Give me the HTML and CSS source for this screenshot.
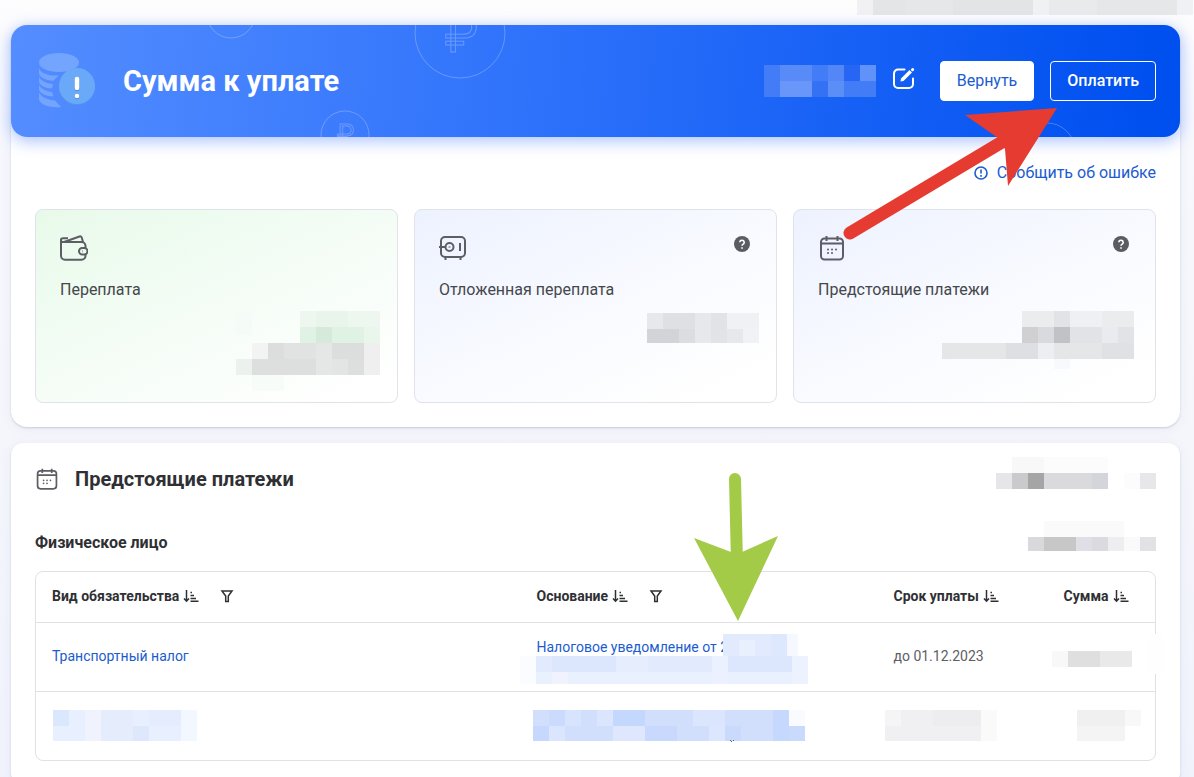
FILE: index.html
```html
<!DOCTYPE html>
<html lang="ru">
<head>
  <meta charset="UTF-8" />
  <meta name="viewport" content="width=device-width, initial-scale=1.0" />
  <title>Сумма к уплате</title>
  <link rel="stylesheet" href="styles.css">
</head>
<body>
  <!-- shared icons -->
  <svg class="sprite" aria-hidden="true">
    <symbol id="calendar" viewBox="0 0 28 28">
      <rect x="3" y="4.5" width="22" height="21" rx="3.5"/>
      <path d="M3 9.5h22M8.500 2v5M19.500 2v5"/>
      <path class="dots" d="M10 15.500h.01M14 15.500h.01M18 15.500h.01M10 19h.01M14 19h.01"/>
    </symbol>
    <symbol id="sort" viewBox="0 0 16 16">
      <path d="M3.500 2v11M1 10.500l2.500 2.700L6 10.500M7.500 4.500h1.500M7.500 7.500h3.500M7.500 10.500h5.500M7.500 13.300h8"/>
    </symbol>
    <symbol id="filter" viewBox="0 0 16 16">
      <path d="M3 3h10L9.300 8v5.500H6.700V8z"/>
    </symbol>
    <symbol id="help" viewBox="0 0 16 16">
      <circle cx="8" cy="8" r="8" fill="#5a5c61"/>
      <path d="M5.800 6.300a2.200 2.100 0 1 1 3.400 1.800c-.8.5-1.200.8-1.200 1.700M8 11.200v1.600" fill="none" stroke="#fff" stroke-width="1.600"/>
    </symbol>
  </svg>

  <div class="page">
    <header class="topbar">
      <svg class="mosaic" width="337" height="15">
        <rect x="0" width="16" height="15" fill="#f1f1f3"/>
        <rect x="16" width="32" height="15" fill="#e4e5e6"/>
        <rect x="48" width="48" height="15" fill="#e6e7e8"/>
        <rect x="96" width="80" height="15" fill="#e3e4e6"/>
        <rect x="176" width="16" height="15" fill="#f0f1f3"/>
        <rect x="192" width="48" height="15" fill="#e9eaec"/>
        <rect x="240" width="80" height="15" fill="#e6e7e8"/>
        <rect x="320" width="16" height="15" fill="#eff1f4"/>
      </svg>
    </header>

    <section class="card summary">
      <div class="banner">
        <svg class="banner-decor" width="1169" height="112" aria-hidden="true">
          <circle cx="220" cy="-11" r="24"/>
          <circle cx="449" cy="8" r="45"/>
          <circle cx="334" cy="110" r="24"/>
          <circle cx="1036" cy="126" r="28"/>
          <text x="434" y="27" font-size="50">₽</text>
          <text x="326" y="118" font-size="26">₽</text>
        </svg>
        <svg class="banner-icon" width="60" height="60" viewBox="0 0 60 60" aria-hidden="true">
          <g fill="#74a5fe">
            <ellipse cx="24" cy="11.500" rx="20" ry="9.500"/>
            <path d="M4 17c2 6 10 8 20 7.500-3 2-4.500 4-5.500 5.500C10 29 4 26 4 22z"/>
            <path d="M4 26c2 4 7 6.500 14 7l-1 4.500C9 37 4 34 4 30z"/>
            <path d="M4 34c2 4 7 6.500 13 7l1.500 4.500C10 45 4 42 4 38z"/>
            <path d="M4 42c3 4.500 9 7 16 7.500l6 6.500C14 57.500 4 53 4 48z"/>
          </g>
          <circle cx="42" cy="36" r="18" fill="#5594f0"/>
          <circle cx="42" cy="35" r="18" fill="#69a9f7"/>
          <path d="M42 29v9M42 46v.01" stroke="#4a86d5" stroke-width="4.500" stroke-linecap="round"/>
          <path d="M42 28v9M42 45v.01" stroke="#fff" stroke-width="4.500" stroke-linecap="round"/>
        </svg>
        <h1>Сумма к уплате</h1>
        <svg class="mosaic banner-amount" width="112" height="32">
          <rect width="112" height="32" fill="#427cf6"/>
          <rect x="16" width="32" height="16" fill="#588bf8"/>
          <rect x="16" y="16" width="32" height="16" fill="#6897f9"/>
          <rect x="48" y="16" width="16" height="16" fill="#3471f5"/>
          <rect x="64" width="16" height="16" fill="#5387f8"/>
          <rect x="64" y="16" width="16" height="16" fill="#5c8ef8"/>
          <rect x="80" width="16" height="16" fill="#2766f5"/>
          <rect x="96" width="16" height="16" fill="#6192f9"/>
        </svg>
        <button class="edit" type="button" aria-label="Изменить">
          <svg width="24" height="24" viewBox="0 0 24 24">
            <path d="M12.500 3.500H6a4 4 0 0 0-4 4V18a4 4 0 0 0 4 4h11a4 4 0 0 0 4-4v-5.500"/>
            <path d="M8.500 15.500l.5-3L17.500 4l2.500 2.500-8.500 8.500z" fill="#fff" stroke="none"/>
            <path d="M20.500 3.700l.2-.2" stroke-width="3"/>
          </svg>
        </button>
        <button class="btn btn-light" type="button">Вернуть</button>
        <button class="btn btn-outline" type="button">Оплатить</button>
      </div>

      <div class="summary-body">
        <a class="report" href="#">
          <svg width="14" height="14" viewBox="0 0 14 14" aria-hidden="true">
            <circle cx="7" cy="7" r="6"/>
            <path d="M7 3.500v4M7 9v1.700"/>
          </svg>
          Сообщить об ошибке
        </a>

        <div class="stats">
          <div class="stat stat-green">
            <div class="stat-top">
              <svg class="icon" width="28" height="28" viewBox="0 0 28 28" aria-hidden="true">
                <path d="M1 5.500v16.300a4 4 0 0 0 4 4h16.500a4 4 0 0 0 4-4V20M25.500 14.500V12a4 4 0 0 0-4-4H3a2 2 0 0 1-2-2.200c0-1 1-1.500 2-1.500h5"/>
                <path d="M4 8L19.500 2.500c1.300-.4 2 .1 2.300 1.200L23 8"/>
                <rect x="19" y="14" width="8.500" height="6.500" rx="3.200"/>
                <path d="M22 17.200h.5"/>
              </svg>
            </div>
            <div class="stat-label">Переплата</div>
            <svg class="mosaic" width="192" height="80">
              <rect x="48" width="16" height="24" fill="#f5fcf7"/>
              <rect x="112" width="80" height="16" fill="#edf6ef"/>
              <rect x="128" width="32" height="16" fill="#e9f4eb"/>
              <rect x="112" y="16" width="80" height="16" fill="#e0f2e3"/>
              <rect x="128" y="16" width="16" height="16" fill="#d6ead9"/>
              <rect x="176" y="16" width="16" height="16" fill="#eaf6ec"/>
              <rect x="64" y="32" width="16" height="16" fill="#f1f4f2"/>
              <rect x="48" y="48" width="16" height="16" fill="#edf1ee"/>
              <rect x="80" y="32" width="96" height="16" fill="#dcdedd"/>
              <rect x="64" y="48" width="112" height="16" fill="#dcdfdd"/>
              <rect x="96" y="32" width="32" height="16" fill="#e0e3e1"/>
              <rect x="128" y="32" width="16" height="32" fill="#e5e7e6"/>
              <rect x="144" y="48" width="16" height="16" fill="#e3e5e4"/>
              <rect x="176" y="32" width="16" height="32" fill="#eeefee"/>
              <rect x="64" y="64" width="32" height="16" fill="#f7fcf8"/>
            </svg>
          </div>
          <div class="stat">
            <div class="stat-top">
              <svg class="icon" width="28" height="28" viewBox="0 0 28 28" aria-hidden="true">
                <rect x="2" y="3" width="24" height="20" rx="4"/>
                <circle cx="10.500" cy="13" r="4"/>
                <path d="M0 13h6M21 9v8M6.500 23v3M21.500 23v3M10.500 12.500v1"/>
              </svg>
              <svg class="help" width="16" height="16"><use href="#help"/></svg>
            </div>
            <div class="stat-label">Отложенная переплата</div>
            <svg class="mosaic" width="192" height="80">
              <rect x="80" y="2" width="112" height="30" fill="#e7e8eb"/>
              <rect x="96" y="2" width="32" height="16" fill="#dfe0e3"/>
              <rect x="80" y="18" width="32" height="14" fill="#d3d4d7"/>
              <rect x="112" y="18" width="16" height="14" fill="#dcdde0"/>
              <rect x="144" y="2" width="16" height="30" fill="#e2e3e6"/>
              <rect x="160" y="2" width="32" height="16" fill="#f0f1f4"/>
              <rect x="176" y="18" width="16" height="14" fill="#f1f2f5"/>
            </svg>
          </div>
          <div class="stat">
            <div class="stat-top">
              <svg class="icon" width="28" height="28" aria-hidden="true"><use href="#calendar"/></svg>
              <svg class="help" width="16" height="16"><use href="#help"/></svg>
            </div>
            <div class="stat-label">Предстоящие платежи</div>
            <svg class="mosaic" width="196" height="80">
              <rect x="80" width="112" height="16" fill="#ebecee"/>
              <rect x="112" width="16" height="16" fill="#e2e3e6"/>
              <rect x="128" width="32" height="16" fill="#eff0f3"/>
              <rect x="80" y="16" width="112" height="16" fill="#e2e3e6"/>
              <rect x="80" y="16" width="16" height="16" fill="#d0d0d3"/>
              <rect x="96" y="16" width="16" height="16" fill="#d9dadd"/>
              <rect x="112" y="16" width="16" height="16" fill="#c1c2c5"/>
              <rect x="160" y="16" width="16" height="16" fill="#eaebee"/>
              <rect y="32" width="192" height="16" fill="#e5e6e8"/>
              <rect x="64" y="32" width="32" height="16" fill="#dedfe2"/>
              <rect x="96" y="32" width="16" height="16" fill="#edeef1"/>
              <rect x="160" y="32" width="32" height="16" fill="#e0e1e4"/>
              <rect x="112" y="48" width="16" height="10" fill="#f8f9fc"/>
            </svg>
          </div>
        </div>
      </div>
    </section>

    <section class="card payments">
      <div class="row-head">
        <svg class="icon" width="24" height="24" aria-hidden="true"><use href="#calendar"/></svg>
        <h2>Предстоящие платежи</h2>
        <svg class="mosaic" width="160" height="24">
          <rect x="16" y="-10" width="32" height="16" fill="#f8f8f8"/>
          <rect x="48" y="-10" width="64" height="16" fill="#fcfcfc"/>
          <rect y="6" width="16" height="16" fill="#e6e6e8"/>
          <rect x="16" y="6" width="16" height="16" fill="#cacacc"/>
          <rect x="32" y="6" width="16" height="16" fill="#a5a5a6"/>
          <rect x="48" y="6" width="48" height="16" fill="#dadadd"/>
          <rect x="96" y="6" width="16" height="16" fill="#d4d4db"/>
          <rect x="128" y="6" width="16" height="16" fill="#fcfcfc"/>
          <rect x="144" y="6" width="16" height="16" fill="#e7e7e9"/>
        </svg>
      </div>

      <div class="row-head person">
        <h3>Физическое лицо</h3>
        <svg class="mosaic" width="128" height="24">
          <rect x="16" y="-10" width="80" height="16" fill="#fafafa"/>
          <rect y="6" width="16" height="14" fill="#d9d9db"/>
          <rect x="16" y="6" width="32" height="14" fill="#c7c7c8"/>
          <rect x="48" y="6" width="16" height="14" fill="#dfdfe5"/>
          <rect x="64" y="6" width="16" height="14" fill="#dbdbdf"/>
          <rect x="80" y="6" width="16" height="14" fill="#eeeef1"/>
          <rect x="96" y="6" width="16" height="14" fill="#fafafa"/>
          <rect x="112" y="6" width="16" height="14" fill="#e2e2e4"/>
        </svg>
      </div>

      <div class="table-wrap">
        <table>
          <colgroup>
            <col class="col-kind">
            <col class="col-basis">
            <col class="col-date">
            <col class="col-sum">
          </colgroup>
          <thead>
            <tr>
              <th><div class="th">Вид обязательства
                <button type="button" aria-label="Сортировать"><svg width="16" height="16"><use href="#sort"/></svg></button>
                <button class="filter" type="button" aria-label="Фильтр"><svg width="16" height="16"><use href="#filter"/></svg></button>
              </div></th>
              <th><div class="th">Основание
                <button type="button" aria-label="Сортировать"><svg width="16" height="16"><use href="#sort"/></svg></button>
                <button class="filter" type="button" aria-label="Фильтр"><svg width="16" height="16"><use href="#filter"/></svg></button>
              </div></th>
              <th><div class="th">Срок уплаты
                <button type="button" aria-label="Сортировать"><svg width="16" height="16"><use href="#sort"/></svg></button>
              </div></th>
              <th><div class="th">Сумма
                <button type="button" aria-label="Сортировать"><svg width="16" height="16"><use href="#sort"/></svg></button>
              </div></th>
            </tr>
          </thead>
          <tbody>
            <tr>
              <td><a href="#">Транспортный налог</a></td>
              <td>
                <div class="masked">
                  <a href="#">Налоговое уведомление от 2</a>
                  <svg class="mosaic" width="288" height="50">
                    <rect x="203" width="75" height="22" fill="#e2ebfd"/>
                    <rect x="219" y="6" width="16" height="16" fill="#e8effd"/>
                    <rect x="251" width="16" height="22" fill="#dde7fd"/>
                    <rect x="267" width="11" height="22" fill="#f5f8fe"/>
                    <rect y="22" width="16" height="28" fill="#fbfcff"/>
                    <rect x="16" y="22" width="272" height="16" fill="#e2eafd"/>
                    <rect x="16" y="38" width="272" height="12" fill="#eaf1fe"/>
                    <rect x="32" y="22" width="64" height="16" fill="#dce7fd"/>
                    <rect x="32" y="38" width="16" height="12" fill="#f0f3fe"/>
                    <rect x="96" y="22" width="32" height="16" fill="#e6eefd"/>
                    <rect x="192" y="22" width="16" height="28" fill="#ebf1fe"/>
                    <rect x="208" y="22" width="64" height="16" fill="#dce7fe"/>
                    <rect x="272" y="22" width="16" height="28" fill="#edf3fe"/>
                  </svg>
                </div>
              </td>
              <td>до 01.12.2023</td>
              <td>
                <div class="masked">
                  <svg class="mosaic" width="116" height="50">
                    <rect x="5" y="17" width="16" height="16" fill="#f8f8f8"/>
                    <rect x="21" y="17" width="64" height="16" fill="#e9e9ea"/>
                    <rect x="21" y="17" width="32" height="16" fill="#dfdfe0"/>
                    <rect x="101" y="0" width="16" height="40" fill="#fefefe"/>
                  </svg>
                </div>
              </td>
            </tr>
            <tr>
              <td>
                <div class="masked">
                  <svg class="mosaic" width="164" height="50">
                    <rect x="18" y="7" width="144" height="31" fill="#e8effe"/>
                    <rect x="18" y="7" width="16" height="16" fill="#dbe7fd"/>
                    <rect x="50" y="7" width="16" height="31" fill="#f0f3fe"/>
                    <rect x="66" y="7" width="32" height="31" fill="#e5edfd"/>
                    <rect x="98" y="23" width="16" height="15" fill="#dde8fd"/>
                    <rect x="114" y="7" width="32" height="16" fill="#e4ecfd"/>
                    <rect x="146" y="7" width="16" height="31" fill="#f3f7ff"/>
                  </svg>
                </div>
              </td>
              <td>
                <div class="masked">
                  <svg class="mosaic" width="288" height="50">
                    <rect x="13" y="7" width="256" height="31" fill="#d1dffd"/>
                    <rect x="29" y="7" width="16" height="16" fill="#cbdbfd"/>
                    <rect x="45" y="7" width="16" height="16" fill="#d8e4fd"/>
                    <rect x="77" y="7" width="16" height="16" fill="#dbe6fe"/>
                    <rect x="93" y="7" width="32" height="16" fill="#c4d7fd"/>
                    <rect x="13" y="23" width="16" height="15" fill="#c6d8fd"/>
                    <rect x="29" y="23" width="16" height="15" fill="#dbe6fe"/>
                    <rect x="93" y="23" width="32" height="15" fill="#dee7fe"/>
                    <rect x="125" y="23" width="32" height="15" fill="#c8d9fd"/>
                    <rect x="173" y="7" width="32" height="16" fill="#dbe5fe"/>
                    <rect x="189" y="23" width="16" height="15" fill="#dce6fe"/>
                    <rect x="205" y="23" width="16" height="15" fill="#c9dafd"/>
                    <rect x="253" y="7" width="16" height="31" fill="#c6d8fd"/>
                    <rect x="269" y="7" width="16" height="16" fill="#f9fbff"/>
                    <rect x="269" y="23" width="16" height="15" fill="#c9dafd"/>
                    <path d="M210 37h1M213 37h1M211 38h1" stroke="#53617a"/>
                  </svg>
                </div>
              </td>
              <td>
                <div class="masked">
                  <svg class="mosaic" width="120" height="50">
                    <rect x="9" y="7" width="96" height="31" fill="#f0f0f2"/>
                    <rect x="9" y="7" width="16" height="16" fill="#f5f5f6"/>
                    <rect x="57" y="7" width="48" height="16" fill="#ededef"/>
                    <rect x="105" y="7" width="16" height="31" fill="#fafafb"/>
                  </svg>
                </div>
              </td>
              <td>
                <div class="masked">
                  <svg class="mosaic" width="100" height="50">
                    <rect x="30" y="7" width="48" height="31" fill="#f4f4f5"/>
                    <rect x="30" y="7" width="48" height="16" fill="#f0f0f1"/>
                    <rect x="78" y="7" width="16" height="16" fill="#f8f8f9"/>
                  </svg>
                </div>
              </td>
            </tr>
          </tbody>
        </table>
      </div>
    </section>

    <!-- pointers over the page -->
    <svg class="pointer pointer-pay" width="216" height="136" viewBox="0 0 216 136" aria-hidden="true">
      <path d="M8 129L160 38" stroke="#e63b30" stroke-width="13" stroke-linecap="round"/>
      <path d="M215 4L123 11 156 34 163 45 166 82z" fill="#e63b30"/>
    </svg>
    <svg class="pointer pointer-basis" width="84" height="148" viewBox="0 0 84 148" aria-hidden="true">
      <path d="M41 6L43 90" stroke="#a3cb48" stroke-width="12" stroke-linecap="round"/>
      <path d="M44 148L0 65 37 79H48L84 63z" fill="#a3cb48"/>
    </svg>
  </div>
</body>
</html>
```
FILE: styles.css
```css
* {
  box-sizing: border-box;
}
body {
  margin: 0;
  font-family: Roboto, "Liberation Sans", sans-serif;
  font-size: 14px;
  line-height: 20px;
  color: #2f3033;
  background: linear-gradient(180deg, #fdfdfe 0, #f7f8fd 120px, #f5f6fb 430px, #f1f3fc 777px);
}
svg {
  display: block;
  flex: none;
}
a {
  color: #1b5ccf;
  text-decoration: none;
}
button {
  font-family: inherit;
  cursor: pointer;
}
h1, h2, h3 {
  margin: 0;
}
.sprite {
  position: absolute;
  width: 0;
  height: 0;
}
.mosaic {
  overflow: visible;
  shape-rendering: crispEdges;
}
.icon {
  fill: none;
  stroke: #5c5e64;
  stroke-width: 2;
  stroke-linejoin: round;
}
.dots {
  stroke-linecap: round;
}
.page {
  position: relative;
  padding: 0 14px 0 11px;
}
.topbar {
  display: flex;
  justify-content: flex-end;
  height: 25px;
  margin-right: -14px;
}
.card {
  background: #fff;
  border-radius: 16px;
  box-shadow: 0 1px 2px rgba(60, 64, 90, 0.2), 0 2px 12px rgba(90, 110, 200, 0.08);
}

/* Banner */
.banner {
  position: relative;
  display: flex;
  align-items: center;
  height: 112px;
  padding: 0 24px;
  border-radius: 16px;
  background: linear-gradient(95deg, #548dff 0%, #2e72fb 45%, #0050f0 97%);
  box-shadow: 0 4px 16px rgba(40, 100, 250, 0.4);
}
.banner-decor {
  position: absolute;
  inset: 0;
  width: 100%;
  border-radius: 16px;
  overflow: hidden;
  fill: none;
  stroke: #fff;
  stroke-opacity: 0.25;
}
.banner h1 {
  margin-left: 28px;
  font-size: 29px;
  line-height: 36px;
  font-weight: 700;
  color: #fff;
}
.banner-amount {
  margin-left: auto;
}
.edit {
  position: relative;
  margin: 0 24px 0 16px;
  padding: 0 0 6px;
  border: none;
  background: none;
}
.edit svg {
  fill: none;
  stroke: #fff;
  stroke-width: 2;
  stroke-linecap: round;
}
.btn {
  position: relative;
  height: 40px;
  padding: 0 16px 2px;
  border: 1px solid #fff;
  border-radius: 4px;
  font-size: 16px;
}
.btn-light {
  background: #fff;
  color: #1b5ccf;
}
.btn-outline {
  margin-left: 16px;
  background: none;
  color: #fff;
  font-weight: 500;
}

/* Summary cards */
.summary-body {
  padding: 24px;
}
.report {
  display: flex;
  justify-content: flex-end;
  align-items: center;
  gap: 9px;
  margin-bottom: 24px;
  font-size: 16px;
  line-height: 24px;
}
.report svg {
  fill: none;
  stroke: currentColor;
  stroke-width: 1.6;
}
.stats {
  display: grid;
  grid-template-columns: repeat(3, 1fr);
  gap: 16px;
}
.stat {
  display: flex;
  flex-direction: column;
  height: 194px;
  padding: 24px 17px 0 24px;
  border: 1px solid #e0e3e9;
  border-radius: 8px;
  background: linear-gradient(155deg, #edf2ff 0%, #f8faff 50%, #fff 90%);
}
.stat-green {
  background: linear-gradient(155deg, #e8faea 0%, #f6fdf7 55%, #fff 95%);
}
.stat-top {
  display: flex;
  justify-content: space-between;
  margin-bottom: 16px;
  padding-right: 9px;
}
.help {
  margin-top: 2px;
}
.stat-label {
  margin-bottom: 9px;
  font-size: 16px;
  line-height: 24px;
  color: #45474c;
}
.stat .mosaic {
  align-self: flex-end;
}

/* Payments */
.payments {
  margin-top: 16px;
  padding: 24px;
  border-radius: 12px;
}
.row-head {
  display: flex;
  align-items: center;
  gap: 16px;
  height: 24px;
}
.row-head .mosaic {
  margin-left: auto;
}
.row-head h2 {
  font-size: 20px;
  line-height: 24px;
  font-weight: 700;
}
.person {
  margin: 40px 0 16px;
}
.person h3 {
  font-size: 16px;
  line-height: 24px;
  font-weight: 700;
}
.table-wrap {
  border: 1px solid #e0e1e5;
  border-radius: 8px;
}
table {
  width: 100%;
  table-layout: fixed;
  border-collapse: collapse;
}
.col-kind {
  width: 43.3%;
}
.col-basis {
  width: 31.9%;
}
.col-date {
  width: 15.2%;
}
th {
  height: 50px;
  padding: 0 0 2px 16px;
  font-weight: 700;
  text-align: left;
}
td {
  height: 69px;
  padding: 0 0 2px 16px;
  border-top: 1px solid #e0e1e5;
  color: #5c5e64;
}
.th {
  display: flex;
  align-items: center;
  gap: 4px;
  white-space: nowrap;
}
.th button {
  padding: 0;
  border: none;
  background: none;
}
.th svg {
  fill: none;
  stroke: #2f3033;
  stroke-width: 1.5;
}
.th .filter {
  margin-left: 16px;
}
.masked {
  position: relative;
  height: 38px;
}
.masked .mosaic {
  position: absolute;
  top: -3px;
  left: -17px;
}

/* Pointers */
.pointer {
  position: absolute;
  fill: none;
  pointer-events: none;
}
.pointer-pay {
  top: 104px;
  right: 136px;
}
.pointer-basis {
  top: 473px;
  left: 694px;
}
```
